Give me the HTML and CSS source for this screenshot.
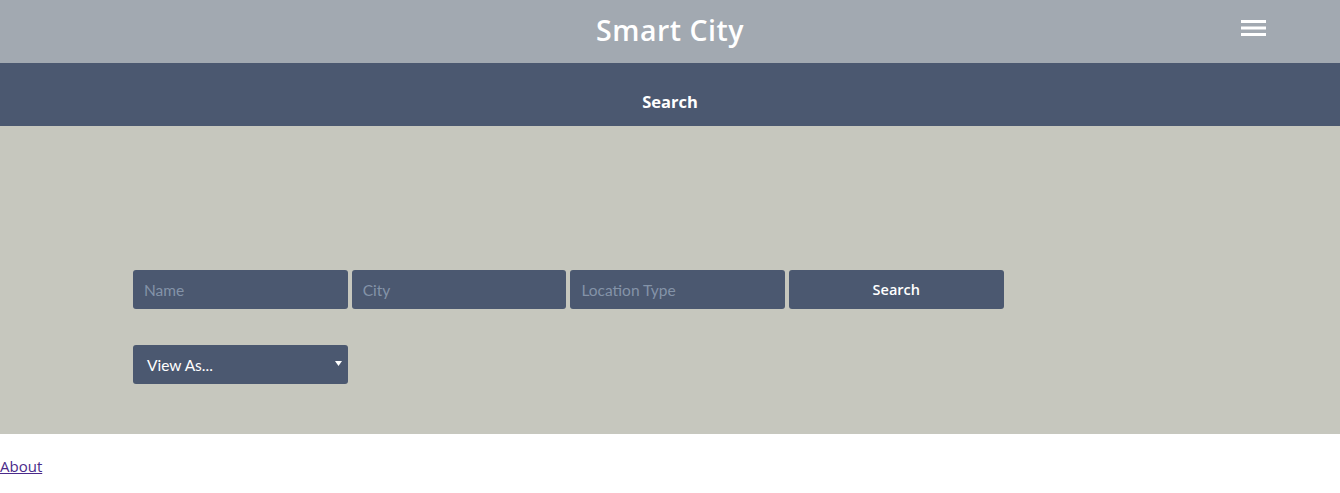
FILE: index.html
```html
<!DOCTYPE html>
<html>
<head>
<meta charset="utf-8">
<link rel="stylesheet" href="styles.css">
</head>
<body>
<header class="topbar">
  <h1 class="brand">Smart City</h1>
  <button class="menu" aria-label="menu">
    <svg width="26" height="16" viewBox="0 0 26 16"><rect x="0" y="0" width="25" height="3" fill="#fff"/><rect x="0" y="6.5" width="25" height="3" fill="#fff"/><rect x="0" y="13" width="25" height="3" fill="#fff"/></svg>
  </button>
</header>
<nav class="subbar"><h2 class="subtitle">Search</h2></nav>
<main class="panel">
  <form class="form">
    <div class="row">
      <input class="field" type="text" placeholder="Name">
      <input class="field" type="text" placeholder="City">
      <input class="field" type="text" placeholder="Location Type">
      <button class="field btn" type="button">Search</button>
    </div>
    <div class="row">
      <div class="select">
        <span>View As...</span>
        <svg class="caret" width="7" height="5" viewBox="0 0 7 5"><path d="M0 0 L7 0 L3.5 5 Z" fill="#fff"/></svg>
      </div>
    </div>
  </form>
</main>
<footer class="foot"><a class="link" href="#about">About</a></footer>
</body>
</html>
```
FILE: styles.css
```css
html, body { margin: 0; padding: 0; background: #fff; }
body { font-family: "Open Sans", "DejaVu Sans", sans-serif; }
.topbar {
  height: 63px; background: #a2a9b1; position: relative;
  display: flex; align-items: center; justify-content: center;
}
.brand {
  margin: 0; color: #fff; font-family: "Open Sans", sans-serif;
  font-weight: 600; font-size: 28.5px; letter-spacing: 0.5px; line-height: 1;
  padding-bottom: 2px;
}
.menu {
  position: absolute; right: 73px; top: 20px; padding: 0; border: 0;
  background: transparent; width: 26px; height: 16px; display: block;
}
.menu svg { display: block; }
.subbar {
  height: 63px; background: #4b5870; display: flex; align-items: center; justify-content: center;
}
.subtitle {
  margin: 0; color: #fff; font-size: 16.5px; font-weight: 700; line-height: 1; padding-top: 15px;
}
.panel { background: #c6c7be; height: 308px; box-sizing: border-box; padding: 144px 0 0 133px; }
.form { display: flex; flex-direction: column; gap: 36px; }
.row { display: flex; gap: 4.2px; }
.field {
  width: 214.5px; height: 39px; box-sizing: border-box; border: 0; border-radius: 3px;
  background: #4b5870; color: #fff; padding: 0 11px; margin: 0;
  font-family: Lato, sans-serif; font-size: 15.5px; outline: none;
}
.field::placeholder { color: #8493a8; }
.btn { font-family: "Open Sans", sans-serif; font-weight: 600; font-size: 14.5px; color: #fff; text-align: center; }
.select {
  width: 215px; height: 39px; box-sizing: border-box; border-radius: 3px; background: #4b5870;
  color: #fff; font-family: Lato, sans-serif; font-size: 15.5px; display: flex; align-items: center;
  justify-content: space-between; padding: 0 6px 0 14px;
}
.caret { display: block; margin-top: -2px; }
.foot { padding-top: 21px; }
.link { color: #4a2a8a; font-family: "Open Sans", sans-serif; font-size: 15px; }
```
